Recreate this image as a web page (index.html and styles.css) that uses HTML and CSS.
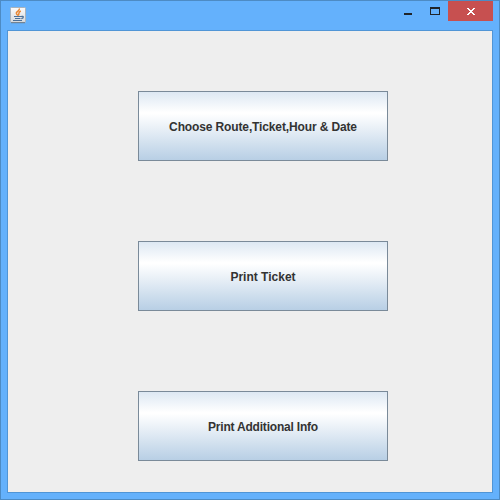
FILE: index.html
```html
<!DOCTYPE html>
<html lang="en">
<head>
<meta charset="utf-8">
<title>Tickets</title>
<link rel="stylesheet" href="styles.css">
</head>
<body>
<div class="window">
  <header class="titlebar">
    <svg class="app-icon" width="16" height="17" viewBox="0 0 16 17">
      <defs><linearGradient id="tile" x1="0" y1="0" x2="0" y2="1"><stop offset="0" stop-color="#fbfbfb"/><stop offset="1" stop-color="#d4d8dc"/></linearGradient></defs>
      <rect x=".5" y=".5" width="15" height="15" rx="1" fill="url(#tile)" stroke="#a9b3bc"/>
      <path d="M1 15.700h14" stroke="#68798a"/>
      <path d="M9.300 1.500C10 4 6 4.500 6.300 6.200Q6.600 7.500 8 8.500M10.800 4C7.500 5.500 9.800 6.200 8.400 8.300" fill="none" stroke="#e88530" stroke-width="1.500"/>
      <path d="M4 9.500h7M5 11.500h5.500M3 13.500h9M11 9.500c3.200-.9 3 1.700.3 2.200" fill="none" stroke="#4b7098" stroke-width="1.200"/>
    </svg>
    <div class="controls">
      <button class="control minimize" aria-label="Minimize"><svg width="8" height="2"><path d="M0 0h8v2H0z" fill="#202428"/></svg></button>
      <button class="control maximize" aria-label="Maximize"><svg width="10" height="8"><path d="M0 0h10v8H0zM1 2v5h8V2z" fill="#202428" fill-rule="evenodd"/></svg></button>
      <button class="control close" aria-label="Close"><svg width="8" height="7" shape-rendering="crispEdges"><path d="M0 0h2v1h1v1h2v-1h1v-1h2v1h-1v1h-1v1h-1v1h1v1h1v1h1v1h-2v-1h-1v-1h-2v1h-1v1h-2v-1h1v-1h1v-1h1v-1h-1v-1h-1v-1h-1z" fill="#fff"/></svg></button>
    </div>
  </header>
  <main class="client">
    <button class="action route">Choose Route,Ticket,Hour &amp; Date</button>
    <button class="action">Print Ticket</button>
    <button class="action info">Print Additional Info</button>
  </main>
</div>
</body>
</html>
```
FILE: styles.css
```css
* { box-sizing: border-box; }
body { margin: 0; }
button { font: inherit; margin: 0; padding: 0; border: 0; background: none; }
svg { display: block; }
.window {
  width: 500px;
  height: 500px;
  display: flex;
  flex-direction: column;
  padding: 0 6px 6px;
  border: 1px solid #4d8bc4;
  background: #64b1fc;
}
.titlebar {
  height: 29px;
  flex: none;
  display: flex;
  justify-content: space-between;
  padding-left: 3px;
}
.app-icon { margin-top: 6px; }
.controls { display: flex; height: 20px; }
.control { height: 20px; display: flex; align-items: flex-start; justify-content: center; }
.minimize { width: 26px; padding-top: 12px; }
.maximize { width: 27px; padding-top: 6px; }
.close { width: 45px; padding-top: 7px; background: #c75050; }
.client {
  flex: 1;
  display: flex;
  flex-direction: column;
  gap: 80px;
  padding: 60px 0 0 130px;
  border: 1px solid #5095d6;
  background: #eee;
}
.action {
  width: 250px;
  height: 70px;
  flex: none;
  padding-top: 2px;
  border: 1px solid #7a8a99;
  background: linear-gradient(#dde8f3 0%, #fff 30%, #fff 32%, #b8cfe5 100%);
  color: #333;
  font: bold 12px/14px "Liberation Sans", Arial, sans-serif;
}
.route { letter-spacing: -0.13px; }
.info { letter-spacing: -0.2px; }
```
